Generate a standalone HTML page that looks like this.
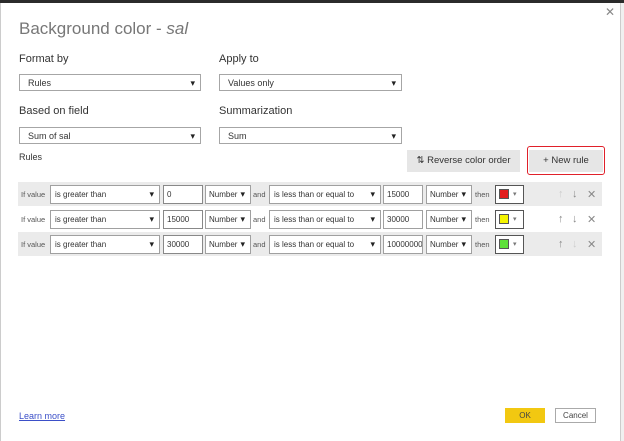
<!DOCTYPE html><html><head><style>
body{margin:0;width:624px;height:441px;background:#fff;font-family:"Liberation Sans",sans-serif;position:relative;overflow:hidden}
.a{position:absolute}
.dd{position:absolute;height:17px;border:1px solid #a6a6a6;background:#fff;font-size:9px;color:#333;line-height:17px;padding-left:8px;box-sizing:border-box}
.dd:after{content:"▾";position:absolute;right:5px;top:0;font-size:9px;color:#222}
.lbl{position:absolute;font-size:11px;color:#333}
.row{position:absolute;left:18px;width:584px;height:24px}
.in{position:absolute;top:3px;height:19px;border:1px solid #a0a0a0;background:#fff;box-sizing:border-box;font-size:8px;line-height:17px;padding-left:3px;color:#333}
.sm{position:absolute;top:8px;font-size:7.5px;color:#555}
.ic{position:absolute;top:6px;font-size:11px;color:#888}
</style></head><body>
<div class="a" style="left:0;top:0;width:624px;height:3px;background:#2b2b2b"></div>
<div class="a" style="left:0;top:3px;width:1px;height:438px;background:#ccc"></div>
<div class="a" style="left:620px;top:3px;width:4px;height:438px;background:#f0f0f0;border-left:1px solid #ccc"></div>
<div class="a" style="left:605px;top:5px;font-size:12px;color:#888">✕</div>
<div class="a" style="left:19px;top:19px;font-size:17px;color:#777">Background color - <i>sal</i></div>
<div class="lbl" style="left:19px;top:53px">Format by</div>
<div class="lbl" style="left:219px;top:53px">Apply to</div>
<div class="dd" style="left:19px;top:74px;width:182px">Rules</div>
<div class="dd" style="left:219px;top:74px;width:183px">Values only</div>
<div class="lbl" style="left:19px;top:105px">Based on field</div>
<div class="lbl" style="left:219px;top:105px">Summarization</div>
<div class="dd" style="left:19px;top:127px;width:182px">Sum of sal</div>
<div class="dd" style="left:219px;top:127px;width:183px">Sum</div>
<div class="a" style="left:19px;top:152px;font-size:9px;color:#333">Rules</div>
<div class="a" style="left:407px;top:150px;width:113px;height:22px;background:#e6e6e6;font-size:9.5px;color:#333;line-height:22px;text-align:center">⇅ Reverse color order</div>
<div class="a" style="left:529px;top:150px;width:74px;height:22px;background:#e6e6e6;font-size:9.5px;color:#333;line-height:22px;text-align:center">+ New rule</div>
<div class="a" style="left:527px;top:146px;width:76px;height:27px;border:1px solid #e0202a;border-radius:3px"></div>

<div class="row" style="top:182px;background:#ebebeb">
<span class="sm" style="left:3px">If value</span><div class="dd in" style="left:32px;width:110px;padding-left:4px">is greater than</div><div class="in" style="left:145px;width:40px;border-color:#888">0</div><div class="dd in" style="left:187px;width:46px;padding-left:3px">Number</div><span class="sm" style="left:235px">and</span><div class="dd in" style="left:251px;width:112px;padding-left:4px">is less than or equal to</div><div class="in" style="left:365px;width:40px">15000</div><div class="dd in" style="left:408px;width:46px;padding-left:3px">Number</div><span class="sm" style="left:457px">then</span><div class="in" style="left:477px;width:29px;border-color:#555"><span class="a" style="left:3px;top:3px;width:10px;height:10px;background:#e31c1c;border:1px solid #555;box-sizing:border-box"></span><span class="a" style="left:17px;top:0;font-size:7px;color:#777">▾</span></div><span class="ic" style="left:540px;color:#ccc">↑</span><span class="ic" style="left:554px">↓</span><span class="ic" style="left:569px">✕</span>
</div>
<div class="row" style="top:207px">
<span class="sm" style="left:3px">If value</span><div class="dd in" style="left:32px;width:110px;padding-left:4px">is greater than</div><div class="in" style="left:145px;width:40px;border-color:#888">15000</div><div class="dd in" style="left:187px;width:46px;padding-left:3px">Number</div><span class="sm" style="left:235px">and</span><div class="dd in" style="left:251px;width:112px;padding-left:4px">is less than or equal to</div><div class="in" style="left:365px;width:40px">30000</div><div class="dd in" style="left:408px;width:46px;padding-left:3px">Number</div><span class="sm" style="left:457px">then</span><div class="in" style="left:477px;width:29px;border-color:#555"><span class="a" style="left:3px;top:3px;width:10px;height:10px;background:#f5f500;border:1px solid #555;box-sizing:border-box"></span><span class="a" style="left:17px;top:0;font-size:7px;color:#777">▾</span></div><span class="ic" style="left:540px">↑</span><span class="ic" style="left:554px">↓</span><span class="ic" style="left:569px">✕</span>
</div>
<div class="row" style="top:232px;background:#ebebeb">
<span class="sm" style="left:3px">If value</span><div class="dd in" style="left:32px;width:110px;padding-left:4px">is greater than</div><div class="in" style="left:145px;width:40px;border-color:#888">30000</div><div class="dd in" style="left:187px;width:46px;padding-left:3px">Number</div><span class="sm" style="left:235px">and</span><div class="dd in" style="left:251px;width:112px;padding-left:4px">is less than or equal to</div><div class="in" style="left:365px;width:40px;overflow:hidden">10000000</div><div class="dd in" style="left:408px;width:46px;padding-left:3px">Number</div><span class="sm" style="left:457px">then</span><div class="in" style="left:477px;width:29px;border-color:#555"><span class="a" style="left:3px;top:3px;width:10px;height:10px;background:#5ee03a;border:1px solid #555;box-sizing:border-box"></span><span class="a" style="left:17px;top:0;font-size:7px;color:#777">▾</span></div><span class="ic" style="left:540px">↑</span><span class="ic" style="left:554px;color:#ccc">↓</span><span class="ic" style="left:569px">✕</span>
</div>

<div class="a" style="left:19px;top:411px;font-size:9px;color:#3b4fc8;text-decoration:underline">Learn more</div>
<div class="a" style="left:505px;top:408px;width:40px;height:15px;background:#f2c811;font-size:8px;color:#444;text-align:center;line-height:15px">OK</div>
<div class="a" style="left:555px;top:408px;width:41px;height:15px;border:1px solid #aaa;box-sizing:border-box;font-size:8px;color:#444;text-align:center;line-height:13px">Cancel</div>
</body></html>
